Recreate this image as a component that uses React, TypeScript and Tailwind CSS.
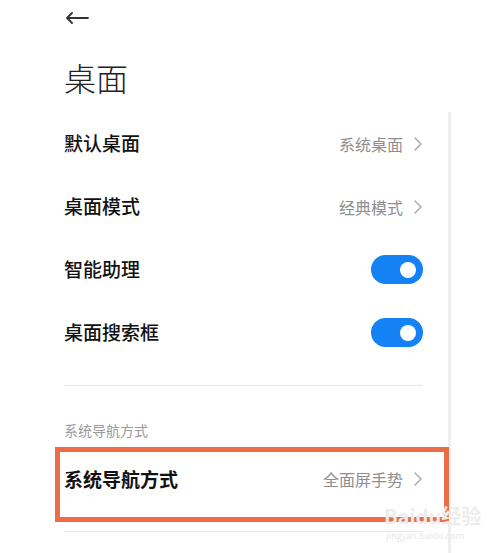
import React from "react";

const font = { fontFamily: '"Noto Sans CJK SC", "Noto Sans", sans-serif' };

function Chevron() {
  return (
    <svg width="10" height="16" viewBox="0 0 10 16" className="ml-[10px]">
      <path d="M2 2 L8 8 L2 14" fill="none" stroke="#a6a6a6" strokeWidth="1.4" strokeLinecap="round" strokeLinejoin="round" />
    </svg>
  );
}

function Toggle() {
  return (
    <div className="w-[52px] h-[29px] rounded-full bg-[#1482f5] flex items-center justify-end pr-[7px]">
      <div className="w-[16px] h-[16px] rounded-full bg-white" />
    </div>
  );
}

function Row({ label, value, toggle }: { label: string; value?: string; toggle?: boolean }) {
  return (
    <div className="h-[63px] flex items-center justify-between">
      <span className="text-[19px] font-medium text-[#111]">{label}</span>
      {toggle ? (
        <Toggle />
      ) : (
        <div className="flex items-center">
          <span className="text-[16px] text-[#8e8e8e]">{value}</span>
          <Chevron />
        </div>
      )}
    </div>
  );
}

export default function App() {
  return (
    <div className="relative w-[500px] h-[553px] bg-white overflow-hidden" style={font}>
      <div className="absolute left-[448px] top-[112px] w-[3px] h-[441px] bg-[#efefef]" />
      <div className="pl-[64px] pr-[77px]">
        <div className="pt-[12px] pl-[1px]">
          <svg width="24" height="12" viewBox="0 0 24 12">
            <path d="M23 6 H2 M7 1 L2 6 L7 11" fill="none" stroke="#333" strokeWidth="1.8" strokeLinecap="round" strokeLinejoin="round" />
          </svg>
        </div>
        <div className="mt-[33px] text-[32px] leading-[40px] text-[#222] font-light">桌面</div>
        <div className="mt-[15px]">
          <Row label="默认桌面" value="系统桌面" />
          <Row label="桌面模式" value="经典模式" />
          <Row label="智能助理" toggle />
          <Row label="桌面搜索框" toggle />
        </div>
        <div className="mt-[21px] h-px bg-[#e8e8e8]" />
        <div className="mt-[34px] text-[14px] leading-[20px] text-[#9a9a9a]">系统导航方式</div>
        <div className="relative mt-[9px]">
          <div className="h-[60px] flex items-center justify-between">
            <span className="text-[19px] font-semibold text-[#111]">系统导航方式</span>
            <div className="flex items-center">
              <span className="text-[16px] text-[#8e8e8e]">全面屏手势</span>
              <Chevron />
            </div>
          </div>
          <div className="absolute left-[-9px] top-[-2px] w-[394px] h-[75px] border-[5px] border-[#ec6c45]" />
        </div>
        <div className="mt-[22px] h-px bg-[#e8e8e8]" />
      </div>
      <div className="absolute left-[384px] top-[505px] text-[20px] font-bold leading-[22px] text-[#ededed]">
        Baidu经验
      </div>
      <div className="absolute left-[386px] top-[531px] text-[9px] leading-[10px] text-[#e8e8e8]">jingyan.baidu.com</div>
    </div>
  );
}
